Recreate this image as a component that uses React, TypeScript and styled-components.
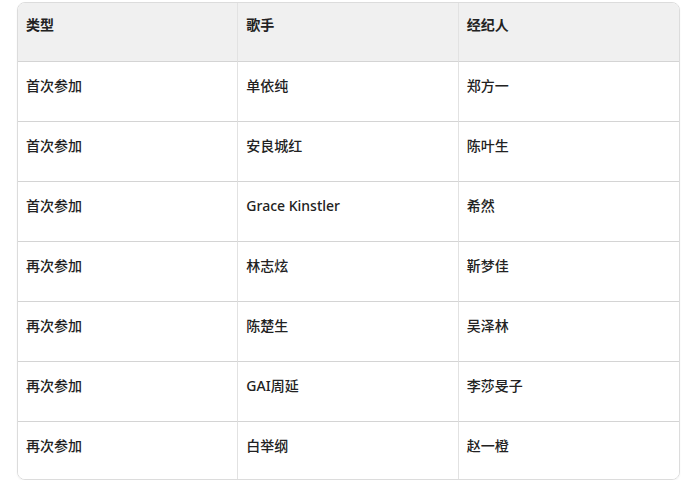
import React from 'react';
import styled, { createGlobalStyle } from 'styled-components';

const GlobalStyle = createGlobalStyle`
  html, body {
    margin: 0;
    padding: 0;
    background: #ffffff;
  }
  body {
    font-family: 'Noto Sans', 'Noto Sans CJK SC', sans-serif;
    color: #222;
  }
`;

const rows = [
  { type: '首次参加', singer: '单依纯', agent: '郑方一' },
  { type: '首次参加', singer: '安良城红', agent: '陈叶生' },
  { type: '首次参加', singer: 'Grace Kinstler', agent: '希然' },
  { type: '再次参加', singer: '林志炫', agent: '靳梦佳' },
  { type: '再次参加', singer: '陈楚生', agent: '吴泽林' },
  { type: '再次参加', singer: 'GAI周延', agent: '李莎旻子' },
  { type: '再次参加', singer: '白举纲', agent: '赵一橙' },
];

const Page = styled.div`
  padding: 2px 11px 0 17px;
`;

const TableWrap = styled.div`
  width: 663px;
  box-sizing: border-box;
  border: 1px solid #dcdcdc;
  border-radius: 8px;
  overflow: hidden;
  box-shadow: 0 1px 2px rgba(0, 0, 0, 0.05);
`;

const Table = styled.table`
  width: 100%;
  border-collapse: separate;
  border-spacing: 0;
  table-layout: fixed;
`;

const Cell = styled.td<{ $head?: boolean; $last?: boolean }>`
  height: ${(p) => (p.$head ? 59 : p.$last ? 57 : 60)}px;
  box-sizing: border-box;
  padding: ${(p) => (p.$head ? 12 : 14)}px 8px 0 8px;
  vertical-align: top;
  text-align: left;
  font-size: 14px;
  line-height: 20px;
  font-weight: ${(p) => (p.$head ? 700 : 500)};
  color: #222;
  background: ${(p) => (p.$head ? '#f0f0f0' : '#ffffff')};
  border-bottom: ${(p) => (p.$last ? 'none' : '1px solid #d4d4d4')};
  border-right: 1px solid #e2e2e2;

  &:last-child {
    border-right: none;
  }
`;

const App = (): JSX.Element => {
  return (
    <>
      <GlobalStyle />
      <Page>
        <TableWrap>
          <Table>
            <thead>
              <tr>
                <Cell as="th" $head>类型</Cell>
                <Cell as="th" $head>歌手</Cell>
                <Cell as="th" $head>经纪人</Cell>
              </tr>
            </thead>
            <tbody>
              {rows.map((r, i) => {
                const last = i === rows.length - 1;
                return (
                  <tr key={i}>
                    <Cell $last={last}>{r.type}</Cell>
                    <Cell $last={last}>{r.singer}</Cell>
                    <Cell $last={last}>{r.agent}</Cell>
                  </tr>
                );
              })}
            </tbody>
          </Table>
        </TableWrap>
      </Page>
    </>
  );
};

export default App;
